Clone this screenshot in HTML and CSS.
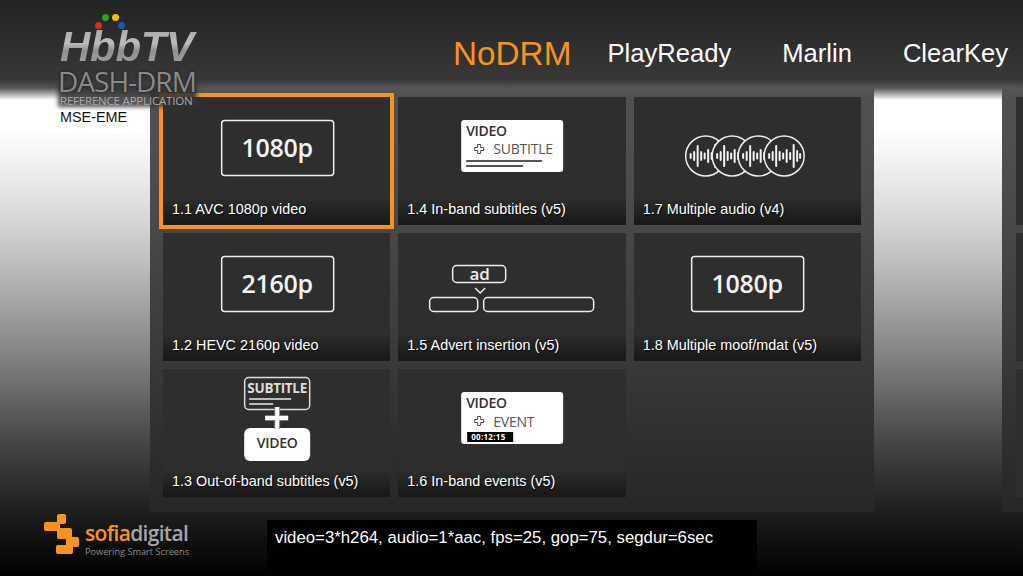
FILE: index.html
```html
<!DOCTYPE html>
<html lang="en">
<head>
<meta charset="utf-8">
<title>HbbTV DASH-DRM Reference Application</title>
<link rel="stylesheet" href="styles.css">
</head>
<body>
<svg class="defs" width="0" height="0" aria-hidden="true">
  <defs>
    <g id="wave">
      <circle cx="0" cy="0" r="20" class="wave-ring"/>
      <path class="wave-bars" d="M-15 -2V2M-11.500 -4V4M-8 -10V10M-4.500 -4V4M-1 -2.500V2.500M2.500 -6V6M6 -3V3M9.500 -11V11M13 -5V5M16 -2V2"/>
    </g>
    <path id="plus" class="plus-outline" d="M-1.500 -4.500h3v3h3v3h-3v3h-3v-3h-3v-3h3z"/>
  </defs>
</svg>
<div class="stage">
  <header class="topbar">
    <nav class="nav">
      <span class="nav-item nav-active">NoDRM</span>
      <span class="nav-item">PlayReady</span>
      <span class="nav-item">Marlin</span>
      <span class="nav-item">ClearKey</span>
    </nav>
  </header>
  <div class="topfade"></div>
  <div class="logo">
    <div class="logo-dots">
      <i class="dot dot-red"></i><i class="dot dot-green"></i><i class="dot dot-yellow"></i><i class="dot dot-blue"></i>
    </div>
    <div class="logo-hbb">HbbTV</div>
    <div class="logo-dash">DASH-DRM</div>
    <div class="logo-ref">REFERENCE APPLICATION</div>
  </div>
  <main class="content">
    <aside class="side">MSE-EME</aside>
    <section class="panel">
      <article class="card card-focus">
        <svg class="art" viewBox="0 0 227 100">
          <rect class="frame" x="58.500" y="23.500" width="112" height="55" rx="3"/>
          <text class="big" x="114" y="60" text-anchor="middle">1080p</text>
        </svg>
        <div class="label">1.1 AVC 1080p video</div>
      </article>
      <article class="card">
        <svg class="art" viewBox="0 0 227 100">
          <rect class="frame" x="58.500" y="23.500" width="112" height="55" rx="3"/>
          <text class="big" x="114" y="60" text-anchor="middle">2160p</text>
        </svg>
        <div class="label">1.2 HEVC 2160p video</div>
      </article>
      <article class="card">
        <svg class="art" viewBox="0 0 227 100">
          <rect class="frame-soft" x="81.500" y="8.500" width="65" height="32" rx="4"/>
          <text class="sub-head" x="114" y="24" text-anchor="middle">SUBTITLE</text>
          <path class="sub-lines" d="M86 30h42M86 35h24"/>
          <rect class="solid" x="81" y="59" width="66" height="33" rx="6"/>
          <path class="plus-back" d="M114 38v22M102 49h23"/>
          <path class="plus-front" d="M114 38v22M102 49h23"/>
          <text class="dark-head" x="114" y="79" text-anchor="middle">VIDEO</text>
        </svg>
        <div class="label">1.3 Out-of-band subtitles (v5)</div>
      </article>
      <article class="card">
        <svg class="art" viewBox="0 0 227 100">
          <rect class="solid" x="63" y="23" width="102" height="52" rx="3"/>
          <text class="dark-head" x="68" y="39">VIDEO</text>
          <use href="#plus" x="81" y="52"/>
          <text class="grey-head" x="95" y="57">SUBTITLE</text>
          <path class="box-lines" d="M68 64h76M68 69h57"/>
        </svg>
        <div class="label">1.4 In-band subtitles (v5)</div>
      </article>
      <article class="card">
        <svg class="art" viewBox="0 0 227 100">
          <rect class="frame" x="54.500" y="32.500" width="53" height="17" rx="4"/>
          <text class="ad" x="81.500" y="47" text-anchor="middle">ad</text>
          <path class="frame" d="M77 55l5 5 5-5"/>
          <rect class="frame" x="31.500" y="64.500" width="48" height="14" rx="4"/>
          <rect class="frame" x="85.500" y="64.500" width="110" height="14" rx="4"/>
        </svg>
        <div class="label">1.5 Advert insertion (v5)</div>
      </article>
      <article class="card">
        <svg class="art" viewBox="0 0 227 100">
          <rect class="solid" x="63" y="23" width="102" height="52" rx="3"/>
          <text class="dark-head" x="68" y="39">VIDEO</text>
          <use href="#plus" x="81" y="52"/>
          <text class="grey-head" x="95" y="58">EVENT</text>
          <rect class="timebox" x="69" y="63" width="46" height="10"/>
          <text class="time" x="73" y="71">00:12:15</text>
        </svg>
        <div class="label">1.6 In-band events (v5)</div>
      </article>
      <article class="card">
        <svg class="art" viewBox="0 0 227 100">
          <use href="#wave" x="71.500" y="59"/>
          <use href="#wave" x="98" y="59"/>
          <use href="#wave" x="124" y="59"/>
          <use href="#wave" x="150" y="59"/>
        </svg>
        <div class="label">1.7 Multiple audio (v4)</div>
      </article>
      <article class="card">
        <svg class="art" viewBox="0 0 227 100">
          <rect class="frame" x="57.500" y="23.500" width="112" height="55" rx="3"/>
          <text class="big" x="113" y="60" text-anchor="middle">1080p</text>
        </svg>
        <div class="label">1.8 Multiple moof/mdat (v5)</div>
      </article>
    </section>
    <section class="panel panel-next">
      <article class="card"></article>
      <article class="card"></article>
      <article class="card"></article>
    </section>
  </main>
  <footer class="footer">
    <div class="brand">
      <svg class="brand-mark" viewBox="0 0 35 40">
        <rect x="13" y="0" width="9" height="10" rx="2"/>
        <rect x="0" y="8" width="16" height="9" rx="2"/>
        <rect x="13" y="14" width="15" height="11" rx="2"/>
        <rect x="22" y="23" width="13" height="10" rx="2"/>
        <rect x="12" y="31" width="17" height="9" rx="2"/>
      </svg>
      <div class="brand-text">
        <div class="brand-name"><span class="brand-sofia">sofia</span><span class="brand-digital">digital</span></div>
        <div class="brand-tag">Powering Smart Screens</div>
      </div>
    </div>
    <div class="info">video=3*h264, audio=1*aac, fps=25, gop=75, segdur=6sec</div>
  </footer>
</div>
</body>
</html>
```

FILE: styles.css
```css
* { box-sizing: border-box; }
html, body { margin: 0; padding: 0; background: #000; }
body { font-family: "Liberation Sans", Arial, sans-serif; }
.defs { position: absolute; }

.stage {
  position: relative;
  width: 1023px;
  height: 576px;
  overflow: hidden;
  display: flex;
  flex-direction: column;
  background: linear-gradient(180deg, #fff 0, #fff 130px, #f2f2f2 160px, #dcdcdc 210px, #c0c0c0 260px, #868686 350px, #474747 440px, #1e1e1e 512px, #000 576px);
}

/* header */
.topbar {
  flex: none;
  height: 88px;
  background: linear-gradient(180deg, #222 0, #383838 80px, #555 88px);
  padding-left: 453px;
}
.topfade {
  position: absolute;
  left: 0;
  right: 0;
  top: 88px;
  height: 12px;
  background: linear-gradient(180deg, rgba(85,85,85,1), rgba(85,85,85,0));
}
.nav {
  display: flex;
  height: 107px;
  align-items: center;
  gap: 51px;
  color: #fff;
  font-size: 25.6px;
  white-space: nowrap;
}
.nav-active {
  color: #f7931e;
  font-size: 33.3px;
  margin-right: -15px;
}

/* logo */
.logo {
  position: absolute;
  z-index: 2;
  left: 58px;
  top: 12px;
  width: 140px;
  color: #888;
}
.logo::before {
  content: "";
  position: absolute;
  left: 0;
  top: 72px;
  width: 139px;
  height: 23px;
  background: rgba(50, 50, 50, .85);
  filter: blur(2px);
}
.logo-dots { position: relative; height: 17px; }
.dot { position: absolute; width: 7px; height: 7px; border-radius: 50%; }
.dot-red { left: 37px; top: 10px; background: #d92b2f; }
.dot-green { left: 44px; top: 2px; background: #2f9e26; }
.dot-yellow { left: 54px; top: 2px; background: #f0c20c; }
.dot-blue { left: 60px; top: 10px; background: #2257a8; }
.logo-hbb {
  position: relative;
  font: italic bold 42px/36px "Liberation Sans", sans-serif;
  margin-left: 2px;
  letter-spacing: -0.3px;
  color: transparent;
  background: linear-gradient(180deg, #aaa 0, #bcbcbc 40%, #909090 60%, #a0a0a0 100%);
  -webkit-background-clip: text;
  background-clip: text;
}
.logo-dash {
  position: relative;
  font: 400 28px/26px "Open Sans", sans-serif;
  letter-spacing: -1px;
  color: #8a8a8a;
  margin-top: 3px;
  text-shadow: 0 0 3px rgba(0,0,0,.6);
  white-space: nowrap;
}
.logo-ref {
  position: relative;
  font: 400 11.500px/12px "Open Sans", sans-serif;
  letter-spacing: -0.2px;
  margin: 1px 0 0 2px;
  color: #aaa;
  white-space: nowrap;
}

/* content */
.content {
  flex: none;
  height: 424px;
  display: flex;
  align-items: stretch;
}
.side {
  flex: none;
  width: 150px;
  padding: 21px 0 0 60px;
  font-size: 14.4px;
  line-height: 17px;
  color: #111;
}
.panel {
  flex: none;
  width: 724px;
  margin-right: 128px;
  padding: 9px 13px 15px;
  background: rgba(41, 41, 41, .82);
  display: grid;
  grid-template-rows: repeat(3, 128px);
  grid-template-columns: repeat(3, 227.33px);
  grid-auto-flow: column;
  gap: 8px;
}
.panel-next { padding-left: 14px; }
.card {
  position: relative;
  background: #2e2e2e;
  display: flex;
  flex-direction: column;
  color: #fff;
}
.card-focus { outline: 4px solid #f7931e; }
.art { display: block; flex: none; width: 100%; height: 100px; }
.label {
  margin-top: auto;
  height: 28px;
  padding: 2px 0 0 9px;
  font-size: 14.4px;
  line-height: 20px;
  white-space: nowrap;
  text-shadow: 1px 1px 1px rgba(0,0,0,.7);
  background: linear-gradient(180deg, rgba(26,26,26,0), #1a1a1a 85%);
}

/* card artwork */
.frame { fill: none; stroke: #eee; stroke-width: 1.5; }
.frame-soft { fill: none; stroke: #ddd; stroke-width: 1.5; }
.solid { fill: #fff; }
.big { font: 600 25px "Open Sans", sans-serif; fill: #f4f4f4; letter-spacing: -0.3px; }
.ad { font: 600 17px "Open Sans", sans-serif; fill: #eee; }
.sub-head { font: 700 13.500px "Open Sans", sans-serif; fill: #ddd; letter-spacing: -0.3px; }
.sub-lines { stroke: #bbb; stroke-width: 2; fill: none; }
.box-lines { stroke: #555; stroke-width: 2; fill: none; }
.dark-head { font: 600 14px "Open Sans", sans-serif; fill: #333; letter-spacing: -0.3px; }
.grey-head { font: 400 14px "Open Sans", sans-serif; fill: #555; letter-spacing: -0.2px; }
.plus-outline { fill: #fff; stroke: #444; stroke-width: 1; }
.plus-back { stroke: #777; stroke-width: 6; fill: none; }
.plus-front { stroke: #fff; stroke-width: 4; fill: none; }
.timebox { fill: #000; }
.time { font: 700 8px "Open Sans", sans-serif; fill: #fff; letter-spacing: .3px; }
.wave-ring { fill: #2e2e2e; stroke: #eee; stroke-width: 1.5; }
.wave-bars { stroke: #f4f4f4; stroke-width: 2; fill: none; stroke-linecap: round; }

/* footer */
.footer {
  flex: none;
  height: 64px;
  display: flex;
  align-items: flex-start;
  padding: 8px 0 0 44px;
}
.brand { flex: none; width: 223px; display: flex; align-items: flex-start; gap: 6px; }
.brand-mark { width: 35px; height: 40px; margin-top: -6px; fill: #f7941d; flex: none; }
.brand-text { width: 110px; }
.brand-name {
  font: 600 21px/24px "Open Sans", sans-serif;
  letter-spacing: -0.7px;
  margin-top: 1px;
  white-space: nowrap;
}
.brand-sofia { color: #f7941d; }
.brand-digital { color: #a5a5a5; }
.brand-tag {
  font: 400 9.200px/13px "Open Sans", sans-serif;
  color: #8a8a8a;
  white-space: nowrap;
}
.info {
  width: 490px;
  height: 50px;
  background: #000;
  color: #fff;
  padding: 8px 0 0 8px;
  font-size: 16.8px;
  line-height: 20px;
  white-space: nowrap;
}
```
